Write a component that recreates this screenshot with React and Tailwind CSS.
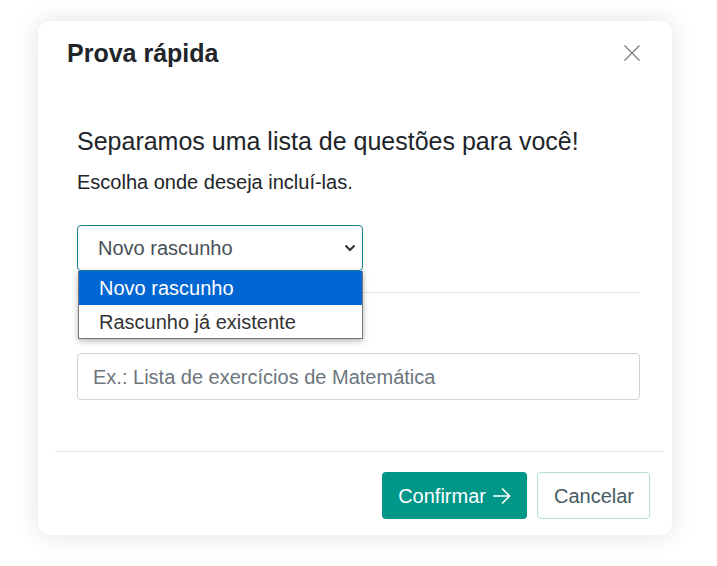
import React from "react";

export default function App() {
  const font = { fontFamily: '"Liberation Sans", Arial, sans-serif' };
  return (
    <div className="min-h-[566px] w-[717px] bg-white" style={font}>
      <div className="pt-[21px] pl-[38px]">
        <div className="relative w-[634px] rounded-[12px] bg-white shadow-[0_0_24px_rgba(0,0,0,0.12)]">
          {/* header */}
          <div className="flex items-start justify-between pl-[29px] pr-[32px] pt-[17px]">
            <h1 className="text-[25px] font-bold leading-[30px] text-[#212529]">Prova rápida</h1>
            <button className="mt-[7px] flex h-[16px] w-[16px] items-center justify-center">
              <svg width="16" height="16" viewBox="0 0 16 16" fill="none" stroke="#7a7a7a" strokeWidth="1.2">
                <path d="M0.5 0.5 L15.5 15.5 M15.5 0.5 L0.5 15.5" />
              </svg>
            </button>
          </div>

          {/* body */}
          <div className="pl-[39px] pr-[32px] pt-[58px]">
            <h2 className="text-[25px] leading-[30px] text-[#212529]">Separamos uma lista de questões para você!</h2>
            <p className="mt-[14px] text-[20px] leading-[24px] text-[#212529]">Escolha onde deseja incluí-las.</p>

            <div className="relative mt-[31px] w-[286px]">
              <div className="flex h-[46px] items-center justify-between rounded-[4px] border border-[#1b7d8b] pl-[20px] pr-[6px]">
                <span className="text-[20px] leading-[24px] text-[#495057]">Novo rascunho</span>
                <svg width="12" height="8" viewBox="0 0 12 8" fill="none" stroke="#333" strokeWidth="2">
                  <path d="M1.5 1.5 L6 6 L10.5 1.5" />
                </svg>
              </div>
              <div className="absolute left-[1px] top-[46px] z-10 w-[285px] border border-t-0 border-[#767676] bg-white shadow-[0_2px_6px_rgba(0,0,0,0.3)]">
                <div className="flex h-[34px] items-center bg-[#0066d3] pl-[20px] text-[20px] leading-[24px] text-white">Novo rascunho</div>
                <div className="flex h-[33px] items-center pl-[20px] text-[20px] leading-[24px] text-[#333]">Rascunho já existente</div>
              </div>
            </div>

            <div className="mt-[21px] h-px w-full bg-[#dee2e6]" />

            <div className="mt-[60px] flex h-[47px] w-full items-center rounded-[4px] border border-[#ced4da] pl-[15px]">
              <span className="text-[20px] leading-[24px] text-[#6c757d]">Ex.: Lista de exercícios de Matemática</span>
            </div>
          </div>

          {/* footer */}
          <div className="ml-[17px] mr-[9px] mt-[51px] h-px bg-[#dee2e6]" />
          <div className="flex justify-end gap-[10px] pb-[16px] pr-[22px] pt-[20px]">
            <button className="flex h-[47px] items-center gap-[6px] rounded-[4px] bg-[#009688] px-[16px] text-[20px] leading-[24px] text-white">
              Confirmar
              <svg width="19" height="18" viewBox="0 0 19 18" fill="none" stroke="white" strokeWidth="1.6">
                <path d="M1 9 H17.5 M10 1.5 L17.5 9 L10 16.5" />
              </svg>
            </button>
            <button className="flex h-[47px] items-center rounded-[4px] border border-[#b2dfdb] bg-white pl-[16px] pr-[15px] text-[20px] leading-[24px] text-[#455a64]">
              Cancelar
            </button>
          </div>
        </div>
      </div>
    </div>
  );
}
